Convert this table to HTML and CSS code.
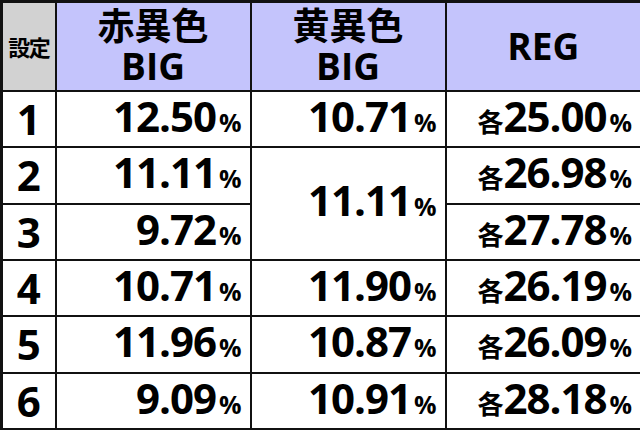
FILE: index.html
```html
<!DOCTYPE html>
<html lang="ja">
<head>
<meta charset="utf-8">
<title>設定別 BIG/REG 確率</title>
<link rel="stylesheet" href="styles.css">
</head>
<body>
<table class="rates">
  <colgroup>
    <col class="c-set">
    <col class="c-val">
    <col class="c-val">
    <col class="c-reg">
  </colgroup>
  <thead>
    <tr class="r-head">
      <th class="h-set">設定</th>
      <th class="h-col"><span class="h-line">赤異色</span><span class="h-line">BIG</span></th>
      <th class="h-col"><span class="h-line">黄異色</span><span class="h-line">BIG</span></th>
      <th class="h-col">REG</th>
    </tr>
  </thead>
  <tbody>
    <tr class="r1">
      <td class="set">1</td>
      <td class="val">12.50<span class="pct">%</span></td>
      <td class="val">10.71<span class="pct">%</span></td>
      <td class="val"><span class="each">各</span>25.00<span class="pct">%</span></td>
    </tr>
    <tr class="r2">
      <td class="set">2</td>
      <td class="val">11.11<span class="pct">%</span></td>
      <td class="val" rowspan="2">11.11<span class="pct">%</span></td>
      <td class="val"><span class="each">各</span>26.98<span class="pct">%</span></td>
    </tr>
    <tr class="r3">
      <td class="set">3</td>
      <td class="val">9.72<span class="pct">%</span></td>
      <td class="val"><span class="each">各</span>27.78<span class="pct">%</span></td>
    </tr>
    <tr class="r4">
      <td class="set">4</td>
      <td class="val">10.71<span class="pct">%</span></td>
      <td class="val">11.90<span class="pct">%</span></td>
      <td class="val"><span class="each">各</span>26.19<span class="pct">%</span></td>
    </tr>
    <tr class="r5">
      <td class="set">5</td>
      <td class="val">11.96<span class="pct">%</span></td>
      <td class="val">10.87<span class="pct">%</span></td>
      <td class="val"><span class="each">各</span>26.09<span class="pct">%</span></td>
    </tr>
    <tr class="r6">
      <td class="set">6</td>
      <td class="val">9.09<span class="pct">%</span></td>
      <td class="val">10.91<span class="pct">%</span></td>
      <td class="val"><span class="each">各</span>28.18<span class="pct">%</span></td>
    </tr>
  </tbody>
</table>
</body>
</html>
```

FILE: styles.css
```css
html, body {
  margin: 0;
  padding: 0;
  background: #ffffff;
}

body {
  width: 640px;
  height: 430px;
  overflow: hidden;
  font-family: "Open Sans", "Noto Sans CJK JP", sans-serif;
  font-weight: 700;
  color: #000;
}

.rates {
  width: 640px;
  height: 430px;
  border-collapse: collapse;
  table-layout: fixed;
  border: 3px solid #111;
}

.c-set { width: 54px; }
.c-val { width: 195px; }
.c-reg { width: 196px; }

.rates th,
.rates td {
  border: 2px solid #111;
  padding: 0;
  vertical-align: middle;
}

.r-head { height: 89px; }
.r1 { height: 56px; }
.r2 { height: 57px; }
.r3 { height: 56px; }
.r4 { height: 56px; }
.r5 { height: 57px; }
.r6 { height: 57px; }

.h-set {
  background: #d2d2d2;
  font-family: "Noto Sans CJK JP", sans-serif;
  font-size: 22px;
  font-weight: 700;
  letter-spacing: -1.5px;
  text-align: center;
  padding-top: 1px;
}

.h-col {
  background: #c4c4fc;
  font-family: "Open Sans", "Noto Sans CJK JP", sans-serif;
  font-size: 37px;
  font-weight: 700;
  line-height: 40px;
  text-align: center;
}

.h-line {
  display: block;
  height: 40px;
}

.set {
  font-size: 42px;
  line-height: 42px;
  text-align: center;
}

.val {
  font-size: 42px;
  line-height: 42px;
  text-align: right;
  padding-right: 8px !important;
  letter-spacing: -1px;
}

.pct {
  font-size: 25px;
  letter-spacing: 0;
  margin-left: 3px;
}

.each {
  font-family: "Noto Sans CJK JP", sans-serif;
  font-size: 26px;
  letter-spacing: 0;
  margin-right: 0;
}
```
